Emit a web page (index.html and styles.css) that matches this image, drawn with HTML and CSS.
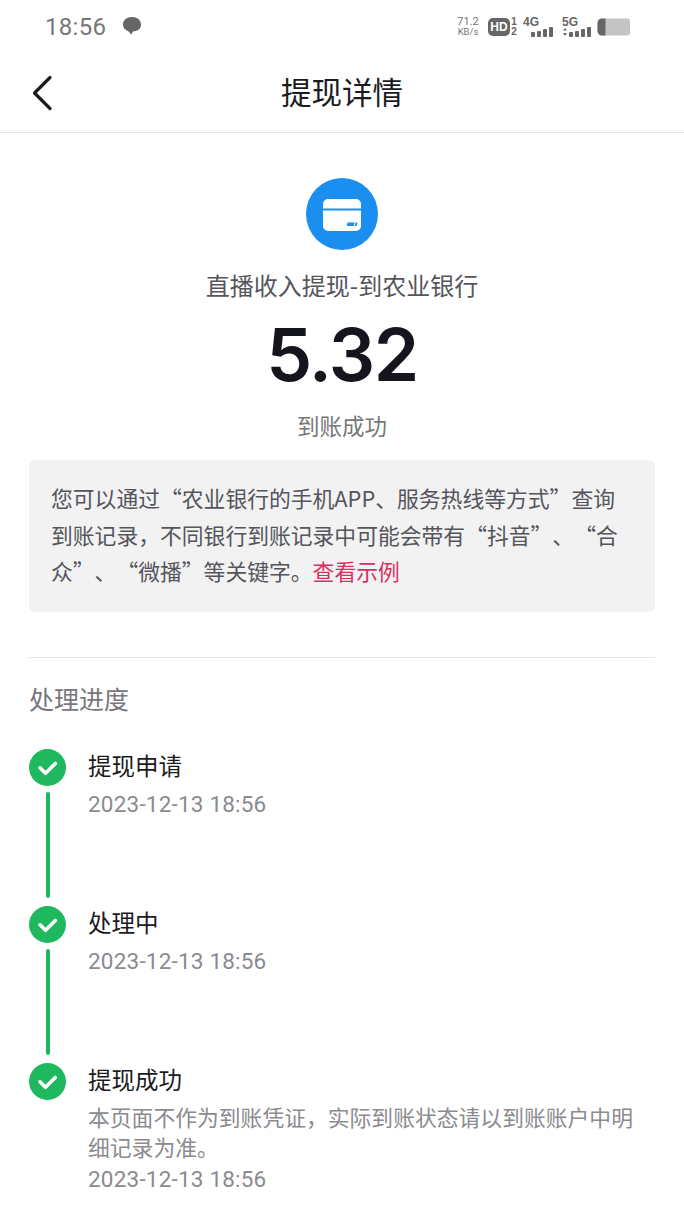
FILE: index.html
```html
<!DOCTYPE html>
<html lang="zh-CN">
<head>
<meta charset="utf-8">
<title>提现详情</title>
<link rel="stylesheet" href="styles.css">
</head>
<body>
<div class="page">
  <div class="statusbar">
    <div class="status-left">
      <span class="clock">18:56</span>
      <svg class="msg" width="20" height="20" viewBox="0 0 20 20"><path d="M10 1C4.800 1 1 4 1 8.600c0 3.400 2.300 5.800 5.600 6.800l2.600 3.200 1.800-3C16 15.400 19 12.500 19 8.600 19 4 15.200 1 10 1z" fill="#666"/></svg>
    </div>
    <div class="status-right">
      <div class="speed"><span>71.2</span><span class="speed-unit">KB/s</span></div>
      <span class="hd">HD</span>
      <div class="sim"><span>1</span><span>2</span></div>
      <div class="net net-4g"><span class="net-label">4G</span>
        <svg class="bars" width="22" height="10" viewBox="0 0 22 10"><g fill="#666"><rect x="0" y="5" width="4" height="5" rx="1"/><rect x="6" y="4" width="4" height="6" rx="1"/><rect x="12" y="2" width="4" height="8" rx="1"/><rect x="18" y="0" width="4" height="10" rx="1"/></g></svg>
      </div>
      <div class="net net-5g"><span class="net-label">5G</span>
        <svg class="bars" width="29" height="10" viewBox="0 0 29 10"><g fill="#666"><path d="M1 3.500l2-2.500 2 2.500zM1 6l2 3 2-3z"/><rect x="7" y="5" width="4" height="5" rx="1"/><rect x="13" y="4" width="4" height="6" rx="1"/><rect x="19" y="2" width="4" height="8" rx="1"/><rect x="25" y="0" width="4" height="10" rx="1"/></g></svg>
      </div>
      <svg class="battery" width="34" height="18" viewBox="0 0 34 18"><path d="M5 .5h25a3 3 0 0 1 3 3v11a3 3 0 0 1-3 3H5A4.500 4.500 0 0 1 .5 13V5A4.500 4.500 0 0 1 5 .5z" fill="#c4c4c4"/><path d="M5 .5h3.500v17H5A4.500 4.500 0 0 1 .5 13V5A4.500 4.500 0 0 1 5 .5z" fill="#666"/></svg>
    </div>
  </div>

  <header class="navbar">
    <svg class="back" width="22" height="36" viewBox="0 0 22 36"><path d="M19 2.500L3.500 18 19 33.500" fill="none" stroke="#1b1b22" stroke-width="3.200" stroke-linecap="round" stroke-linejoin="round"/></svg>
    <h1 class="title">提现详情</h1>
  </header>

  <section class="summary">
    <svg class="card-icon" width="72" height="72" viewBox="0 0 72 72">
      <circle cx="36" cy="36" r="36" fill="#1b8ff0"/>
      <path d="M22 21h28a5 5 0 0 1 5 5v4.500H17V26a5 5 0 0 1 5-5zM17 32.500h38V48a5 5 0 0 1-5 5H22a5 5 0 0 1-5-5z" fill="#fff"/>
      <path d="M41.500 44.500h7l-.8 3.500h-7zM49.500 44.500h2l-.8 3.500h-2z" fill="#1b8ff0"/>
    </svg>
    <p class="sub">直播收入提现-到农业银行</p>
    <p class="amount">5.32</p>
    <p class="state">到账成功</p>
  </section>

  <section class="notice">您可以通过“农业银行的手机APP、服务热线等方式”查询到账记录，不同银行到账记录中可能会带有“抖音”、“合众”、“微播”等关键字。<span class="link">查看示例</span></section>

  <div class="rule"></div>

  <h2 class="progress-title">处理进度</h2>

  <ol class="steps">
    <li class="step">
      <div class="rail">
        <svg class="check" width="37" height="37" viewBox="0 0 37 37"><circle cx="18.500" cy="18.500" r="18.500" fill="#1fb85f"/><path d="M11 18.800l5.500 5.500 9.800-9.800" fill="none" stroke="#fff" stroke-width="3.600" stroke-linecap="round" stroke-linejoin="round"/></svg>
        <div class="line"></div>
      </div>
      <div class="step-body">
        <div class="step-name">提现申请</div>
        <div class="step-time">2023-12-13 18:56</div>
      </div>
    </li>
    <li class="step">
      <div class="rail">
        <svg class="check" width="37" height="37" viewBox="0 0 37 37"><circle cx="18.500" cy="18.500" r="18.500" fill="#1fb85f"/><path d="M11 18.800l5.500 5.500 9.800-9.800" fill="none" stroke="#fff" stroke-width="3.600" stroke-linecap="round" stroke-linejoin="round"/></svg>
        <div class="line"></div>
      </div>
      <div class="step-body">
        <div class="step-name">处理中</div>
        <div class="step-time">2023-12-13 18:56</div>
      </div>
    </li>
    <li class="step">
      <div class="rail">
        <svg class="check" width="37" height="37" viewBox="0 0 37 37"><circle cx="18.500" cy="18.500" r="18.500" fill="#1fb85f"/><path d="M11 18.800l5.500 5.500 9.800-9.800" fill="none" stroke="#fff" stroke-width="3.600" stroke-linecap="round" stroke-linejoin="round"/></svg>
      </div>
      <div class="step-body">
        <div class="step-name">提现成功</div>
        <div class="step-desc">本页面不作为到账凭证，实际到账状态请以到账账户中明细记录为准。</div>
        <div class="step-time">2023-12-13 18:56</div>
      </div>
    </li>
  </ol>
</div>
</body>
</html>
```

FILE: styles.css
```css
* { box-sizing: border-box; }
html, body { margin: 0; padding: 0; background: #fff; }
body { font-family: "Noto Sans CJK SC", "Roboto", "Liberation Sans", sans-serif; color: #1b1b22; text-spacing-trim: space-all; }
.page { width: 684px; height: 1216px; overflow: hidden; }
p, h1, h2, ol { margin: 0; padding: 0; }
ol { list-style: none; }

.statusbar { height: 54px; display: flex; justify-content: space-between; align-items: center; padding: 0 53px 0 45px; }
.status-left { display: flex; align-items: center; gap: 16px; }
.clock { font-family: Roboto, sans-serif; font-size: 24px; color: #777; letter-spacing: .3px; line-height: 1; }
.msg { margin-top: -3px; }
.status-right { display: flex; align-items: center; color: #666; }
.speed { display: flex; flex-direction: column; align-items: center; width: 22px; font-family: Roboto, sans-serif; font-size: 11px; line-height: 10px; color: #777; margin-right: 9px; }
.speed-unit { font-size: 9.500px; }
.hd { background: #666; color: #fff; font: 700 12px/18px "Liberation Sans", sans-serif; width: 22px; height: 18px; border-radius: 5px; text-align: center; }
.sim { display: flex; flex-direction: column; width: 6px; font: 700 10px/10px "Liberation Sans", sans-serif; margin: 0 6px 0 1px; align-items: center; }
.net { display: flex; flex-direction: column; height: 20px; }
.net-4g { width: 30px; margin-right: 9px; }
.net-5g { width: 29px; margin-right: 6px; }
.net-label { font: 700 12px/11px "Liberation Sans", sans-serif; color: #666; }
.bars { margin-top: -1px; flex: none; }
.net-4g .bars { align-self: flex-end; }
.battery { flex: none; }

.navbar { position: relative; height: 79px; display: flex; align-items: center; justify-content: center; border-bottom: 1px solid #e6e6e6; }
.back { position: absolute; left: 31px; top: 21px; }
.title { font-size: 30.500px; font-weight: 400; line-height: 40px; margin-top: -5px; color: #1b1b22; }

.summary { display: flex; flex-direction: column; align-items: center; padding-top: 45px; }
.sub { margin-top: 18px; font-size: 24px; line-height: 34px; color: #55555c; }
.amount { font-family: Inter, Roboto, sans-serif; font-size: 73px; font-weight: 600; line-height: 92px; letter-spacing: -1.500px; color: #15151e; margin-top: 7px; }
.state { font-size: 22.500px; line-height: 34px; color: #777; margin-top: 7px; }

.notice { margin: 18px 29px 0; padding: 20px 22px 0; height: 152px; background: #f2f2f2; border-radius: 6px; font-size: 21.800px; line-height: 36.500px; color: #55555c; }
.link { color: #db2e63; }

.rule { margin: 45px 29px 0; height: 1px; background: #e6e6e6; }
.progress-title { margin: 22px 29px 0; font-size: 25px; font-weight: 400; line-height: 36px; color: #77777c; }

.steps { margin-top: 33px; padding: 0 29px; }
.step { display: flex; gap: 22px; height: 157px; }
.step:last-child { height: auto; }
.rail { width: 37px; flex: none; display: flex; flex-direction: column; align-items: center; }
.check { display: block; flex: none; }
.line { width: 4px; height: 106px; margin-top: 6px; border-radius: 2px; background: #1fb85f; }
.step-body { flex: 1; min-width: 0; padding-right: 18px; }
.step-name { font-size: 23.500px; line-height: 36px; color: #1b1b22; margin-top: -2px; }
.step-time { font-family: Roboto, sans-serif; font-size: 22.500px; line-height: 31px; color: #8a8a8f; margin-top: 6px; letter-spacing: .2px; }
.step-desc { font-size: 21.800px; line-height: 30px; color: #8a8a8f; margin-top: 5px; }
.step-desc + .step-time { margin-top: 2px; }
```
